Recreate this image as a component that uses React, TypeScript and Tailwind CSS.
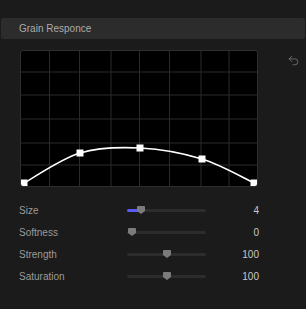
import { Undo2 } from 'lucide-react'

const W = 238
const H = 137
const cols = [29.5, 59.5, 91, 119.5, 149.5, 181, 209]
const rows = [22, 45, 69, 93, 115]
const pts: [number, number][] = [
  [4, 133],
  [60, 103],
  [120, 98],
  [182, 109],
  [234, 133],
]

// catmull-rom through the control points
function curvePath(p: [number, number][]) {
  let d = `M${p[0][0]} ${p[0][1]}`
  for (let i = 0; i < p.length - 1; i++) {
    const p0 = p[i - 1] ?? p[i]
    const p1 = p[i]
    const p2 = p[i + 1]
    const p3 = p[i + 2] ?? p2
    const c1x = p1[0] + (p2[0] - p0[0]) / 6
    const c1y = p1[1] + (p2[1] - p0[1]) / 6
    const c2x = p2[0] - (p3[0] - p1[0]) / 6
    const c2y = p2[1] - (p3[1] - p1[1]) / 6
    d += ` C${c1x} ${c1y} ${c2x} ${c2y} ${p2[0]} ${p2[1]}`
  }
  return d
}

const sliders = [
  { label: 'Size', value: '4', pos: 14, fill: true },
  { label: 'Softness', value: '0', pos: 4.5, fill: false },
  { label: 'Strength', value: '100', pos: 39.5, fill: false },
  { label: 'Saturation', value: '100', pos: 39.5, fill: false },
]

function Thumb({ x }: { x: number }) {
  return (
    <svg width="8" height="8" viewBox="0 0 8 8" className="absolute top-[-3px]" style={{ left: x - 4 }}>
      <path d="M0 1Q0 0 1 0H7Q8 0 8 1V5L4 8L0 5Z" fill="#7b7b7b" />
    </svg>
  )
}

export default function App() {
  return (
    <div className="w-[306px] h-[309px] bg-[#1b1b1b] overflow-hidden font-['Liberation_Sans',Arial,sans-serif] text-[10px]">
      {/* Header */}
      <div className="mt-[18px] mx-[1px] h-[21px] bg-[#2c2c2c] rounded-[2px] flex items-center pl-[18px] text-[#ababab]">
        Grain Responce
      </div>

      {/* Curve graph */}
      <div className="flex mt-[11px]">
        <div className="ml-[20px] w-[238px] h-[137px] bg-black rounded-[3px] border border-[#2e2e2e] overflow-hidden">
          <svg width={W} height={H} viewBox={`0 0 ${W} ${H}`} className="block -m-px">
            {cols.map(x => (
              <line key={x} x1={x} y1={0} x2={x} y2={H} stroke="#2a2a2a" strokeWidth="1" />
            ))}
            {rows.map(y => (
              <line key={y} x1={0} y1={y} x2={W} y2={y} stroke="#2a2a2a" strokeWidth="1" />
            ))}
            <path d={curvePath(pts)} fill="none" stroke="#ffffff" strokeWidth="1.6" />
            {pts.map(([x, y]) => (
              <rect key={x} x={x - 3.5} y={y - 3.5} width="7" height="7" fill="#ffffff" />
            ))}
          </svg>
        </div>
        <div className="ml-[29px] pt-[4px]">
          <Undo2 size={13} color="#7a7a7a" strokeWidth={1.5} />
        </div>
      </div>

      {/* Sliders */}
      <div className="mt-[12px]">
        {sliders.map(s => (
          <div key={s.label} className="flex items-center h-[22px] pl-[19px] pr-[47px]">
            <div className="w-[108px] text-[#9a9a9a]">{s.label}</div>
            <div className="relative w-[79px] h-[3px] bg-[#2c2c2c] rounded-full">
              {s.fill && <div className="absolute left-0 top-0 h-[3px] bg-[#5b5bf2] rounded-l-full" style={{ width: s.pos }} />}
              <Thumb x={s.pos} />
            </div>
            <div className="flex-1 text-right text-[#c8c8c8]">{s.value}</div>
          </div>
        ))}
      </div>
    </div>
  )
}
